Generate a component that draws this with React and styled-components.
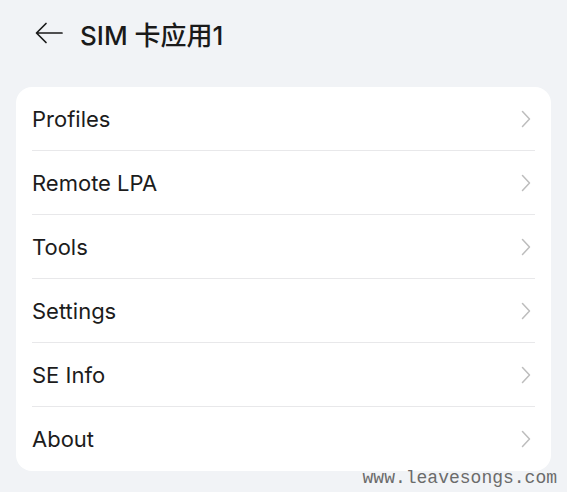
import React from "react";
import styled, { createGlobalStyle } from "styled-components";

const Global = createGlobalStyle`
  html, body { margin: 0; padding: 0; background: #f1f3f6; }
  body { font-family: Inter, "Noto Sans CJK SC", sans-serif; }
`;

const Page = styled.div`
  position: relative;
  width: 567px;
  height: 492px;
  background: #f1f3f6;
  box-sizing: border-box;
  padding: 0 16px;
  overflow: hidden;
`;

const Header = styled.div`
  display: flex;
  align-items: center;
  height: 66px;
  padding-left: 19px;
  gap: 17px;
  margin-bottom: 21px;
`;

const Title = styled.h1`
  margin: 0;
  font-size: 26px;
  font-weight: 500;
  color: #1a1a1a;
  font-family: Inter, "Noto Sans CJK SC", sans-serif;
`;

const Card = styled.div`
  background: #fff;
  border-radius: 16px;
  padding: 0 16px;
`;

const Row = styled.div`
  display: flex;
  align-items: center;
  justify-content: space-between;
  height: 64px;
  box-sizing: border-box;
  border-bottom: ${(p) => (p.$last ? "none" : "1px solid #e8e8ea")};
`;

const Label = styled.span`
  font-size: 22px;
  color: #1c1c1c;
  line-height: 1;
`;

const Chevron = styled.svg`
  width: 10px;
  height: 18px;
  margin-right: 4px;
`;

const Watermark = styled.div`
  position: absolute;
  right: 10px;
  top: 468px;
  font-family: "Liberation Mono", monospace;
  font-size: 18px;
  color: #6b6b6b;
`;

const items = ["Profiles", "Remote LPA", "Tools", "Settings", "SE Info", "About"];

export default function App() {
  return (
    <Page>
      <Global />
      <Header>
        <svg width="28" height="22" viewBox="0 0 28 22" fill="none" stroke="#1a1a1a" strokeWidth="1.7" strokeLinecap="round" strokeLinejoin="round">
          <path d="M27 11H2M11 1.5L1.5 11L11 20.5" />
        </svg>
        <Title>SIM 卡应用1</Title>
      </Header>
      <Card>
        {items.map((t, i) => (
          <Row key={t} $last={i === items.length - 1}>
            <Label>{t}</Label>
            <Chevron viewBox="0 0 10 18" fill="none" stroke="#bdbdbd" strokeWidth="1.5" strokeLinecap="round" strokeLinejoin="round">
              <path d="M1.5 1.5L8.5 9L1.5 16.5" />
            </Chevron>
          </Row>
        ))}
      </Card>
      <Watermark>www.leavesongs.com</Watermark>
    </Page>
  );
}
